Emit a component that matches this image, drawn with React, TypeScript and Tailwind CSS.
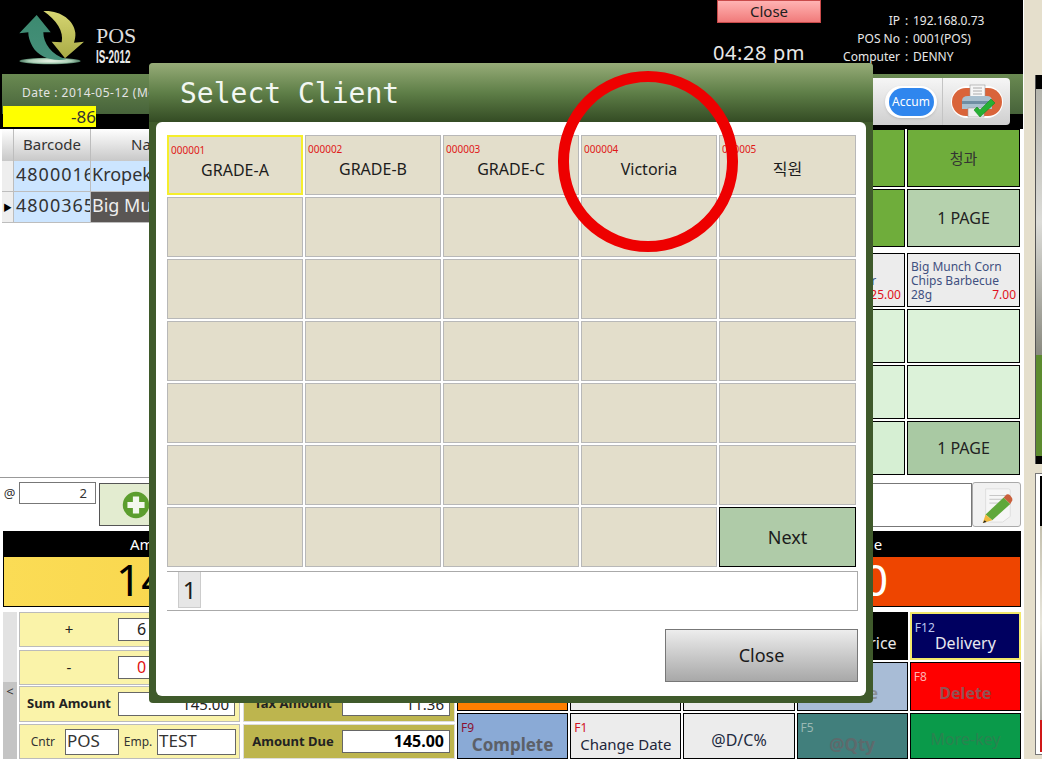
import React from "react";

const Logo = () => (
  <svg viewBox="0 0 390 216" className="w-[130px] h-[72px] shrink-0">
    <defs>
      <linearGradient id="te" x1="0" y1="0" x2="0" y2="1">
        <stop offset="0" stopColor="#3c8a70" />
        <stop offset="1" stopColor="#46907a" />
      </linearGradient>
      <linearGradient id="ye" x1="0" y1="0" x2="0" y2="1">
        <stop offset="0" stopColor="#d6d572" />
        <stop offset="1" stopColor="#a9ab45" />
      </linearGradient>
      <radialGradient id="el">
        <stop offset="0" stopColor="#f0f5ea" />
        <stop offset="0.7" stopColor="#a9cdb4" />
        <stop offset="1" stopColor="#4c7a62" />
      </radialGradient>
    </defs>
    <ellipse cx="120" cy="183" rx="92" ry="10" fill="url(#el)" />
    <path d="M80 45 L122 97 L100 97 C100 130 125 165 168 178 C125 185 85 170 68 140 C58 122 55 110 55 97 L28 100 Z" fill="url(#te)" />
    <path d="M100 33 C150 30 192 60 196 98 C197 108 195 118 192 128 L222 125 L165 175 L125 125 L155 127 C162 95 140 60 100 33 Z" fill="url(#ye)" />
  </svg>
);

const Printer = () => (
  <svg viewBox="0 0 46 36" className="w-[46px] h-[36px]">
    <rect x="16" y="1" width="15" height="13" fill="#f6f6f6" stroke="#999" strokeWidth="0.6" />
    <path d="M19 4h9M19 7h9M19 10h9" stroke="#999" strokeWidth="0.8" />
    <path d="M8 17 Q8 12 14 12 H33 Q38 12 38 17 V25 H8 Z" fill="#a9c0cf" />
    <rect x="8" y="17" width="30" height="3" fill="#6f8ea3" />
    <rect x="14" y="24" width="16" height="9" fill="#eeeeee" stroke="#999" strokeWidth="0.6" />
    <path d="M20 26 L26 33 L41 19 L37 15 L26 26 L23 23 Z" fill="#27b034" stroke="#118a22" strokeWidth="0.6" />
  </svg>
);

const Notepad = () => (
  <svg viewBox="0 0 40 40" className="w-[38px] h-[38px]">
    <path d="M8 3 H32 Q34 3 34 5 V32 L26 38 H12 Q8 38 8 34 Z" fill="#f6f6f6" stroke="#dddddd" />
    <path d="M12 10h18M12 14h14M12 18h10" stroke="#c4c4c4" strokeWidth="1" />
    <path d="M8 30 L27 12 L34 19 L15 36 Z" fill="#5fa83a" />
    <path d="M27 12 L30 9 Q32 8 34 10 L36 13 Q37 15 35 17 L34 19 Z" fill="#c9603c" />
    <path d="M8 30 L15 36 L5 39 Z" fill="#f0b93c" />
    <path d="M5 39 L7 36 L9 38 Z" fill="#222" />
  </svg>
);

const TopInfo = ({ label, value }: { label: string; value: string }) => (
  <div className="flex h-[18px] items-center">
    <span className="w-[72px] text-right">{label}</span>
    <span className="w-[13px] text-center">:</span>
    <span>{value}</span>
  </div>
);

const Header = () => (
  <div className="flex h-[74px] bg-black text-[#e8e8e8]">
    <div className="flex pl-[10px]">
      <Logo />
      <div className="flex flex-col -ml-[44px] pt-[23px] w-[60px]">
        <span className="font-['Liberation_Serif',serif] text-[22px] leading-[25px] text-[#dddddd]">POS</span>
        <span className="font-['Liberation_Sans',sans-serif] font-bold text-[19px] leading-[18px] origin-left scale-x-[0.52] whitespace-nowrap">IS-2012</span>
      </div>
    </div>
    <div className="flex-1" />
    <div className="flex flex-col w-[109px] mr-[6px] items-start">
      <div className="ml-[4px] w-[104px] h-[23px] border border-[#c94a4a] bg-gradient-to-b from-[#ffb3b3] to-[#f07a7a] text-center text-[15px] leading-[20px] text-[#202020]">Close</div>
      <div className="mt-[17px] text-[20px] leading-[26px] tracking-[0.6px] whitespace-nowrap">04:28 pm</div>
    </div>
    <div className="w-[195px] pt-[12px] text-[12px]">
      <TopInfo label="IP" value="192.168.0.73" />
      <TopInfo label="POS No" value="0001(POS)" />
      <TopInfo label="Computer" value="DENNY" />
    </div>
  </div>
);

const DateBar = () => (
  <div className="relative h-[55px] pl-[2px] bg-black">
    <div className="h-[40px] bg-gradient-to-b from-[#6a8a52] to-[#47633a] pl-[20px] pt-[11px] text-[12px] leading-[16px] tracking-[0.5px] text-[#e4e4e4] whitespace-nowrap">
      Date : 2014-05-12 (Mon)
    </div>
    <div className="absolute left-[3px] top-[32px] w-[93px] h-[21px] bg-[#ffff00] text-right text-[17px] leading-[21px] text-[#333333]">-86</div>
    <div className="absolute right-[13px] top-[4px] w-[150px] h-[47px] rounded-[4px] bg-gradient-to-b from-[#f6f6f6] to-[#cfcfcf] flex items-center">
      <div className="ml-[25px] w-[52px] h-[32px] rounded-full bg-white flex items-center justify-center shadow-sm">
        <div className="w-[45px] h-[28px] rounded-full bg-[#2f86ee] text-center text-[12px] leading-[28px] text-white">Accum</div>
      </div>
      <div className="ml-[5px] w-px h-[47px] bg-[#c4c4c4]" />
      <div className="ml-[8px] relative w-[52px] h-[32px] rounded-full bg-white flex items-center justify-center">
        <div className="absolute inset-x-[1px] inset-y-[2px] rounded-full bg-[#d9643a]" />
        <div className="relative"><Printer /></div>
      </div>
    </div>
  </div>
);

const TableRow = ({ code, name, active }: { code: string; name: string; active?: boolean }) => (
  <div className="flex h-[31px] text-[18px] leading-[27px]">
    <div className="w-[12px] bg-[#eeeeee] border-r border-b border-[#bdbdbd] flex items-center justify-center text-[9px] text-black">{active ? "▶" : ""}</div>
    <div className="w-[77px] bg-[#cce5ff] border-r border-b border-[#bdbdbd] overflow-hidden whitespace-nowrap tracking-[1px] pl-[2px] text-[#333333]">{code}</div>
    <div className={`flex-1 border-b border-[#bdbdbd] pl-[1px] whitespace-nowrap overflow-hidden ${active ? "bg-[#5a5654] text-[#eeeeee]" : "bg-[#cce5ff] text-[#333333]"}`}>{name}</div>
  </div>
);

const Table = () => (
  <div className="flex-1 pl-[2px] bg-white border-b border-[#999999]">
    <div className="flex h-[32px] text-[15px] leading-[30px] text-[#333333]">
      <div className="w-[12px] bg-gradient-to-b from-white to-[#c8c8c8] border-r border-[#bdbdbd]" />
      <div className="w-[77px] bg-gradient-to-b from-white to-[#c8c8c8] border-r border-[#bdbdbd] text-center">Barcode</div>
      <div className="flex-1 bg-gradient-to-b from-white to-[#c8c8c8] pl-[40px]">Name</div>
    </div>
    <TableRow code="4800016111" name="Kropek Chips" />
    <TableRow code="4800365610" name="Big Munch Corn" active />
  </div>
);

const Cell = ({ cls, children }: { cls: string; children?: React.ReactNode }) => (
  <div className={`border border-black ${cls}`}>{children}</div>
);

const Products = () => (
  <div className="w-[227px] flex flex-col mr-[2px]">
    <div className="grid grid-cols-[111px_113px] gap-[2px]">
      <Cell cls="h-[58px] bg-[#6fad3b]" />
      <Cell cls="h-[58px] bg-[#6fad3b] flex items-center justify-center text-[15px] text-[#333333]">청과</Cell>
      <Cell cls="h-[58px] bg-[#6fad3b]" />
      <Cell cls="h-[58px] bg-[#b5d1ad] flex items-center justify-center text-[16px] text-[#222222]">1 PAGE</Cell>
    </div>
    <div className="grid grid-cols-[111px_113px] gap-[2px] mt-[6px]">
      <Cell cls="h-[54px] bg-[#ececec] relative text-[12px] leading-[14px] text-[#3f5080] px-[3px] pt-[6px]">
        <div>Kropek Chips</div>
        <div>Shrimp Flavor</div>
        <div className="flex justify-between"><span>90g</span><span className="text-[#e01020]">25.00</span></div>
      </Cell>
      <Cell cls="h-[54px] bg-[#ececec] text-[12px] leading-[14px] text-[#3f5080] px-[3px] pt-[6px]">
        <div>Big Munch Corn</div>
        <div>Chips Barbecue</div>
        <div className="flex justify-between"><span>28g</span><span className="text-[#e01020]">7.00</span></div>
      </Cell>
      <Cell cls="h-[54px] bg-[#dcf2d9]" />
      <Cell cls="h-[54px] bg-[#dcf2d9]" />
      <Cell cls="h-[54px] bg-[#dcf2d9]" />
      <Cell cls="h-[54px] bg-[#dcf2d9]" />
      <Cell cls="h-[54px] bg-[#d6efd3]" />
      <Cell cls="h-[54px] bg-[#a9c9a3] flex items-center justify-center text-[16px] text-[#222222]">1 PAGE</Cell>
    </div>
  </div>
);

const QtyRow = () => (
  <div className="flex h-[53px] text-[#333333]">
    <div className="w-[19px] pt-[4px] text-center text-[13px] leading-[22px]">@</div>
    <div className="w-[77px] h-[22px] mt-[4px] border border-[#777777] text-right pr-[8px] text-[13px] leading-[20px] bg-white">2</div>
    <div className="w-[52px] h-[43px] ml-[3px] mt-[5px] bg-[#e3ecd0] border border-[#555555] flex items-center justify-center">
      <svg viewBox="0 0 36 36" className="w-[36px] h-[36px] ml-[22px]">
        <circle cx="18" cy="18" r="17" fill="#5c9e2e" />
        <path d="M14 7h8v7h7v8h-7v7h-8v-7H7v-8h7z" fill="#f4f8ee" />
      </svg>
    </div>
    <div className="flex-1" />
    <div className="w-[100px] h-[44px] mt-[5px] border border-[#777777] bg-white" />
    <div className="w-[49px] h-[45px] mt-[4px] mr-[2px] border border-[#aaaaaa] rounded-[3px] bg-[#f1f1f1] flex items-center justify-center"><Notepad /></div>
  </div>
);

const Totals = () => (
  <div className="flex h-[76px] ml-[3px] mr-[2px]">
    <div className="w-[340px]">
      <div className="h-[26px] bg-black text-white text-[15px] leading-[26px] pl-[127px]">Amount</div>
      <div className="h-[50px] bg-gradient-to-r from-[#fbdc55] to-[#f7d348] text-black text-[44px] leading-[44px] pl-[112px] border border-black border-t-0">145.00</div>
    </div>
    <div className="w-[340px]">
      <div className="h-[26px] bg-black" />
      <div className="h-[50px] bg-[#dfe8f2]" />
    </div>
    <div className="flex-1">
      <div className="h-[26px] bg-black text-white text-[15px] leading-[26px] pl-[145px]">Change</div>
      <div className="h-[50px] bg-[#ee4500] text-white text-[44px] leading-[44px] pl-[180px] border border-black border-t-0 border-l-0">0</div>
    </div>
  </div>
);

const Field = ({ w, h, cls, children }: { w: string; h: string; cls?: string; children?: React.ReactNode }) => (
  <div className={`${w} ${h} border border-[#666666] bg-white ${cls ?? ""}`}>{children}</div>
);

const Fn = ({ cls, fk, fkc, label, lc, fs, bold }: { cls: string; fk?: string; fkc?: string; label: string; lc: string; fs?: string; bold?: boolean }) => (
  <div className={`relative border border-black ${cls}`}>
    {fk && <span className={`absolute left-[3px] top-[6px] text-[12px] leading-[15px] ${fkc}`}>{fk}</span>}
    <div className={`absolute inset-x-0 text-center whitespace-nowrap leading-[24px] ${bold ? "font-bold" : ""} ${fs ?? "text-[16px]"} ${lc}`}>{label}</div>
  </div>
);

const Bottom = () => (
  <div className="flex h-[152px] pt-[5px]">
    <div className="w-[14px] ml-[3px] rounded-t-[2px] flex flex-col">
      <div className="h-[70px] bg-[#e2e2e2]" />
      <div className="flex-1 bg-[#c4c4c4] text-center text-[13px] leading-[18px] text-[#333333]">&lt;</div>
    </div>
    <div className="w-[221px] ml-[2px] flex flex-col text-[#222222]">
      <div className="h-[35px] bg-[#faf3a9] border border-[#bbbbbb] flex items-center">
        <span className="w-[98px] text-center text-[15px]">+</span>
        <Field w="w-[117px]" h="h-[23px]" cls="text-[16px] leading-[21px] pl-[18px]">6</Field>
      </div>
      <div className="h-[35px] mt-[3px] bg-[#faf3a9] border border-[#bbbbbb] flex items-center">
        <span className="w-[98px] text-center text-[15px]">-</span>
        <Field w="w-[117px]" h="h-[23px]" cls="text-[16px] leading-[21px] pl-[18px] text-[#e01010]">0</Field>
      </div>
      <div className="h-[36px] mt-[1px] bg-[#faf3a9] border border-[#bbbbbb] flex items-center">
        <span className="w-[98px] text-center text-[13px] font-bold whitespace-nowrap">Sum Amount</span>
        <Field w="w-[117px]" h="h-[24px]" cls="text-right pr-[5px] text-[15px] leading-[22px]">145.00</Field>
      </div>
      <div className="h-[35px] mt-[2px] bg-[#faf3a9] border border-[#bbbbbb] flex items-center text-[#333333]">
        <span className="w-[45px] text-right pr-[10px] text-[12px]">Cntr</span>
        <Field w="w-[54px]" h="h-[26px]" cls="text-[17px] leading-[22px] pl-[1px]">POS</Field>
        <span className="w-[38px] text-center text-[12px]">Emp.</span>
        <Field w="w-[79px]" h="h-[26px]" cls="text-[17px] leading-[22px] pl-[1px]">TEST</Field>
      </div>
    </div>
    <div className="w-[212px] ml-[3px] flex flex-col text-[#222222]">
      <div className="h-[35px] bg-[#bdb54e]" />
      <div className="h-[35px] mt-[3px] bg-[#bdb54e]" />
      <div className="h-[36px] mt-[1px] bg-[#bdb54e] border border-[#dddddd] flex items-center">
        <span className="w-[98px] text-center text-[13px] font-bold whitespace-nowrap">Tax Amount</span>
        <Field w="w-[108px]" h="h-[24px]" cls="text-right pr-[5px] text-[15px] leading-[22px]">11.36</Field>
      </div>
      <div className="h-[35px] mt-[2px] bg-[#bdb54e] border border-[#dddddd] flex items-center">
        <span className="w-[98px] text-center text-[13px] font-bold whitespace-nowrap">Amount Due</span>
        <Field w="w-[108px]" h="h-[23px]" cls="text-right pr-[5px] text-[16px] leading-[21px] font-bold text-black">145.00</Field>
      </div>
    </div>
    <div className="ml-[2px] w-[564px] grid grid-cols-5 grid-rows-[48px_49px_46px] gap-[2px]">
      <Fn cls="bg-[#ececec]" label="" lc="" />
      <Fn cls="bg-[#ececec]" label="" lc="" />
      <Fn cls="bg-[#ececec]" label="" lc="" />
      <Fn cls="bg-black" label="Change Price" lc="text-[#e8e8e8] bottom-[4px] pr-[16px]" />
      <Fn cls="bg-[#000060] border-2 !border-[#f2e86a]" fk="F12" fkc="text-[#bcc6ee]" label="Delivery" lc="text-[#e8e8f0] bottom-[3px]" />
      <Fn cls="bg-[#ff7f00]" label="" lc="" />
      <Fn cls="bg-[#ececec]" label="" lc="" />
      <Fn cls="bg-[#ececec]" label="" lc="" />
      <Fn cls="bg-[#a8bcd6]" label="Storage" lc="text-[#8a8f96] bottom-[5px] pr-[10px]" bold />
      <Fn cls="bg-[#ff0000]" fk="F8" fkc="text-[#ffb0b0]" label="Delete" lc="text-[#935252] bottom-[5px]" bold />
      <Fn cls="bg-[#8aaad6]" fk="F9" fkc="text-[#8a1030]" label="Complete" lc="text-[#5c6068] bottom-[1px]" fs="text-[17px]" bold />
      <Fn cls="bg-[#ececec]" fk="F1" fkc="text-[#d01020]" label="Change Date" lc="text-[#22263a] bottom-[2px]" fs="text-[15px]" />
      <Fn cls="bg-[#ececec]" label="@D/C%" lc="text-[#222a40] bottom-[6px]" />
      <Fn cls="bg-[#417f7c]" fk="F5" fkc="text-[#9ab8b4]" label="@Qty" lc="text-[#5d6a6c] bottom-[1px]" fs="text-[17px]" bold />
      <Fn cls="bg-[#0a9a4a]" label="More-key" lc="text-[#2b8250] bottom-[7px]" />
    </div>
  </div>
);

const RightPanel = () => (
  <div className="w-[19px] pl-[1px] bg-white">
    <div className="h-full bg-[#e5dfcc] flex flex-col pl-[11px] pt-[75px]">
      <div className="w-[7px] h-[389px] flex flex-col border-l border-[#555555]">
        <div className="h-[14px] bg-black" />
        <div className="h-[266px] bg-gradient-to-b from-[#b4b4ac] via-[#dcdcd8] to-[#8a8a80]" />
        <div className="h-[101px] bg-[#5c8b2e]" />
        <div className="h-[8px] bg-black" />
      </div>
      <div className="w-[7px] h-[282px] mt-[9px] border-l border-t border-b border-[#777777] bg-white pl-[4px] pt-[2px] flex flex-col">
        <div className="h-[50px] bg-black" />
        <div className="h-[194px] bg-gradient-to-b from-[#c4c0ae] via-[#e8e6dc] to-[#a8a8a0]" />
        <div className="h-[32px] bg-[#d01818]" />
      </div>
    </div>
  </div>
);

const ClientCell = ({ code, name, selected }: { code?: string; name?: string; selected?: boolean }) => (
  <div className={`relative h-[60px] bg-[#e3decb] ${selected ? "border-2 border-[#f5ee2c]" : "border border-[#b8b8b8]"}`}>
    {code && <span className="absolute left-[2px] top-[6px] text-[10px] leading-[14px] text-[#e01818]">{code}</span>}
    {name && <div className="absolute inset-x-0 top-[22px] text-center text-[16px] leading-[22px] text-[#1c1c1c]">{name}</div>}
  </div>
);

const Modal = () => {
  const named = [
    ["000001", "GRADE-A"],
    ["000002", "GRADE-B"],
    ["000003", "GRADE-C"],
    ["000004", "Victoria"],
    ["000005", "직원"],
  ];
  return (
    <div className="absolute left-[149px] top-[63px] w-[724px] h-[640px] bg-[#3f5a2b] rounded-[4px] flex flex-col">
      <div className="h-[59px] rounded-t-[4px] bg-gradient-to-b from-[#97ac78] via-[#5f7f48] to-[#344c24] pl-[31px] pt-[13px] font-['DejaVu_Sans_Mono',monospace] text-[28px] leading-[36px] text-[#f2f7f2] whitespace-pre">
        Select Client
      </div>
      <div className="mx-[7px] mb-[7px] flex-1 rounded-[6px] bg-white pl-[11px] pt-[13px] flex flex-col">
        <div className="grid grid-cols-[136px_136px_136px_136px_137px] gap-[2px]">
          {named.map(([c, n], i) => (
            <ClientCell key={c} code={c} name={n} selected={i === 0} />
          ))}
          {Array.from({ length: 29 }).map((_, i) => (
            <ClientCell key={i} />
          ))}
          <div className="h-[60px] bg-[#afcba8] border border-black flex items-center justify-center text-[18px] text-[#1c1c1c]">Next</div>
        </div>
        <div className="mt-[4px] h-[40px] w-[691px] border-y border-r border-[#aaaaaa] pl-[11px]">
          <div className="w-[23px] h-[36px] bg-[#e6e6e6] border border-[#cccccc] border-t-0 text-center text-[24px] leading-[36px] text-[#1c1c1c]">1</div>
        </div>
        <div className="flex justify-end mt-[18px] w-[691px]">
          <div className="w-[193px] h-[53px] border border-[#777777] bg-gradient-to-b from-[#ededed] to-[#a8a8a8] flex items-center justify-center text-[18px] text-[#1a1a1a]">Close</div>
        </div>
      </div>
    </div>
  );
};

export default function App() {
  return (
    <div className="relative w-[1042px] h-[759px] overflow-hidden bg-white flex font-['Noto_Sans','Noto_Sans_CJK_KR',sans-serif]">
      <div className="w-[1023px] flex flex-col">
        <Header />
        <DateBar />
        <div className="flex h-[349px]">
          <Table />
          <Products />
        </div>
        <QtyRow />
        <Totals />
        <Bottom />
      </div>
      <RightPanel />
      <Modal />
      <div className="absolute left-[558px] top-[71px] w-[180px] h-[181px] rounded-full border-[11px] border-[#ee0000]" />
    </div>
  );
}
